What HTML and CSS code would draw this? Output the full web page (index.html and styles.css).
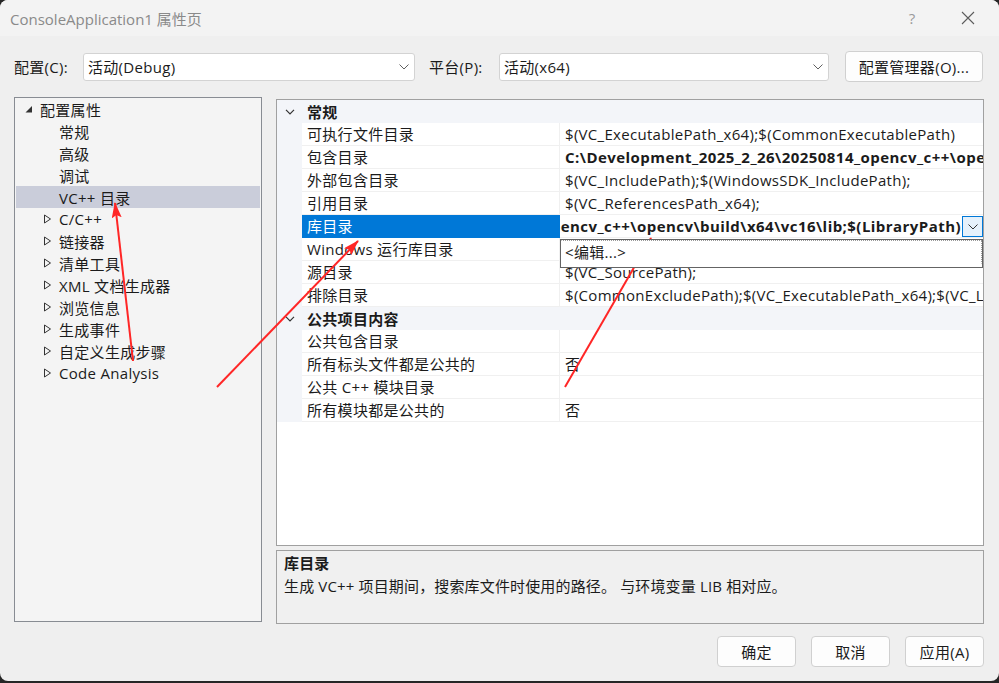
FILE: index.html
```html
<!DOCTYPE html>
<html lang="zh-CN">
<head>
    <meta charset="UTF-8">
    <title>ConsoleApplication1 属性页</title>
    <link rel="stylesheet" href="styles.css">
</head>
<body>
<div class="window">
    <!-- タイトルバー -->
    <div class="titlebar">
        <span class="title">ConsoleApplication1 属性页</span>
        <span class="help">?</span>
        <span class="close">
            <svg width="14" height="14" viewBox="0 0 14 14"><path d="M1 1L13 13M13 1L1 13" stroke="#5c5c5c" stroke-width="1.1" fill="none"/></svg>
        </span>
    </div>

    <!-- 構成 / プラットフォーム -->
    <div class="toolbar">
        <span class="field-label">配置(C):</span>
        <div class="combo combo-config">
            <span>活动(Debug)</span>
            <svg class="chev" width="10" height="6" viewBox="0 0 10 6"><polyline points="0.5,0.5 5,5 9.5,0.5" stroke="#606060" fill="none"/></svg>
        </div>
        <span class="field-label platform-label">平台(P):</span>
        <div class="combo combo-platform">
            <span>活动(x64)</span>
            <svg class="chev" width="10" height="6" viewBox="0 0 10 6"><polyline points="0.5,0.5 5,5 9.5,0.5" stroke="#606060" fill="none"/></svg>
        </div>
        <button class="btn btn-manager">配置管理器(O)...</button>
    </div>

    <div class="main">
        <!-- 左ツリー -->
        <div class="tree">
            <div class="tree-row level0">
                <span class="twisty"><svg width="10" height="22"><polygon points="8,8 8,14.5 1.5,14.5" fill="#333"/></svg></span>
                <span>配置属性</span>
            </div>
            <div class="tree-row level1"><span class="twisty"></span><span>常规</span></div>
            <div class="tree-row level1"><span class="twisty"></span><span>高级</span></div>
            <div class="tree-row level1"><span class="twisty"></span><span>调试</span></div>
            <div class="tree-row level1 selected"><span class="twisty"></span><span>VC++ 目录</span></div>
            <div class="tree-row level1"><span class="twisty"><svg width="10" height="22"><polygon points="1.5,7 7.5,11 1.5,15" fill="none" stroke="#333"/></svg></span><span>C/C++</span></div>
            <div class="tree-row level1"><span class="twisty"><svg width="10" height="22"><polygon points="1.5,7 7.5,11 1.5,15" fill="none" stroke="#333"/></svg></span><span>链接器</span></div>
            <div class="tree-row level1"><span class="twisty"><svg width="10" height="22"><polygon points="1.5,7 7.5,11 1.5,15" fill="none" stroke="#333"/></svg></span><span>清单工具</span></div>
            <div class="tree-row level1"><span class="twisty"><svg width="10" height="22"><polygon points="1.5,7 7.5,11 1.5,15" fill="none" stroke="#333"/></svg></span><span>XML 文档生成器</span></div>
            <div class="tree-row level1"><span class="twisty"><svg width="10" height="22"><polygon points="1.5,7 7.5,11 1.5,15" fill="none" stroke="#333"/></svg></span><span>浏览信息</span></div>
            <div class="tree-row level1"><span class="twisty"><svg width="10" height="22"><polygon points="1.5,7 7.5,11 1.5,15" fill="none" stroke="#333"/></svg></span><span>生成事件</span></div>
            <div class="tree-row level1"><span class="twisty"><svg width="10" height="22"><polygon points="1.5,7 7.5,11 1.5,15" fill="none" stroke="#333"/></svg></span><span>自定义生成步骤</span></div>
            <div class="tree-row level1"><span class="twisty"><svg width="10" height="22"><polygon points="1.5,7 7.5,11 1.5,15" fill="none" stroke="#333"/></svg></span><span>Code Analysis</span></div>
        </div>

        <div class="right">
            <!-- プロパティグリッド -->
            <div class="grid">
                <div class="cat-row">
                    <span class="cat-toggle"><svg width="10" height="6" viewBox="0 0 10 6"><polyline points="1,0.8 5,4.8 9,0.8" stroke="#333" stroke-width="1.2" fill="none"/></svg></span>
                    <span class="cat-name">常规</span>
                </div>
                <div class="prop-row">
                    <span class="gutter"></span>
                    <span class="name">可执行文件目录</span>
                    <span class="value">$(VC_ExecutablePath_x64);$(CommonExecutablePath)</span>
                </div>
                <div class="prop-row">
                    <span class="gutter"></span>
                    <span class="name">包含目录</span>
                    <span class="value bold">C:\Development_2025_2_26\20250814_opencv_c++\opencv\build\include;$(IncludePath)</span>
                </div>
                <div class="prop-row">
                    <span class="gutter"></span>
                    <span class="name">外部包含目录</span>
                    <span class="value">$(VC_IncludePath);$(WindowsSDK_IncludePath);</span>
                </div>
                <div class="prop-row">
                    <span class="gutter"></span>
                    <span class="name">引用目录</span>
                    <span class="value">$(VC_ReferencesPath_x64);</span>
                </div>
                <div class="prop-row active">
                    <span class="gutter"></span>
                    <span class="name">库目录</span>
                    <div class="value editing">
                        <div class="edit-text"><span class="bold">C:\Development_2025_2_26\20250814_opencv_c++\opencv\build\x64\vc16\lib;$(LibraryPath)</span></div>
                        <span class="dd-btn"><svg width="10" height="6" viewBox="0 0 10 6"><polyline points="0.5,0.5 5,5 9.5,0.5" stroke="#333" fill="none"/></svg></span>
                        <div class="dd-list">
                            <div class="dd-item">&lt;编辑...&gt;</div>
                        </div>
                    </div>
                </div>
                <div class="prop-row">
                    <span class="gutter"></span>
                    <span class="name">Windows 运行库目录</span>
                    <span class="value">$(WindowsSDK_MetadataPath);</span>
                </div>
                <div class="prop-row">
                    <span class="gutter"></span>
                    <span class="name">源目录</span>
                    <span class="value">$(VC_SourcePath);</span>
                </div>
                <div class="prop-row">
                    <span class="gutter"></span>
                    <span class="name">排除目录</span>
                    <span class="value">$(CommonExcludePath);$(VC_ExecutablePath_x64);$(VC_LibraryPath_x64)</span>
                </div>
                <div class="cat-row">
                    <span class="cat-toggle"><svg width="10" height="6" viewBox="0 0 10 6"><polyline points="1,0.8 5,4.8 9,0.8" stroke="#333" stroke-width="1.2" fill="none"/></svg></span>
                    <span class="cat-name">公共项目内容</span>
                </div>
                <div class="prop-row">
                    <span class="gutter"></span>
                    <span class="name">公共包含目录</span>
                    <span class="value"></span>
                </div>
                <div class="prop-row">
                    <span class="gutter"></span>
                    <span class="name">所有标头文件都是公共的</span>
                    <span class="value">否</span>
                </div>
                <div class="prop-row">
                    <span class="gutter"></span>
                    <span class="name">公共 C++ 模块目录</span>
                    <span class="value"></span>
                </div>
                <div class="prop-row">
                    <span class="gutter"></span>
                    <span class="name">所有模块都是公共的</span>
                    <span class="value">否</span>
                </div>
            </div>

            <!-- 説明欄 -->
            <div class="desc">
                <div class="desc-title">库目录</div>
                <div class="desc-text">生成 VC++ 项目期间，搜索库文件时使用的路径。 与环境变量 LIB 相对应。</div>
            </div>
        </div>
    </div>

    <div class="footer">
        <button class="btn">确定</button>
        <button class="btn">取消</button>
        <button class="btn">应用(A)</button>
    </div>

    <!-- 赤い矢印 (注釈) -->
    <svg class="arrows" width="999" height="683" viewBox="0 0 999 683">
        <defs>
            <marker id="head" markerUnits="userSpaceOnUse" markerWidth="16" markerHeight="10" refX="15" refY="5" orient="auto">
                <polygon points="0,0 16,5 0,10 3,5" fill="#ff2626"/>
            </marker>
        </defs>
        <line x1="133" y1="361" x2="115" y2="203" stroke="#ff2626" stroke-width="2" marker-end="url(#head)"/>
        <line x1="217" y1="387" x2="358" y2="241" stroke="#ff2626" stroke-width="2" marker-end="url(#head)"/>
        <line x1="565" y1="387" x2="651" y2="238" stroke="#ff2626" stroke-width="2" marker-end="url(#head)"/>
    </svg>
</div>
</body>
</html>
```

FILE: styles.css
```css
html, body { margin: 0; background: #262626; }
body {
    width: 999px;
    height: 683px;
    overflow: hidden;
    font-family: "Segoe UI", "Open Sans", "Noto Sans CJK SC", sans-serif;
    font-size: 15px;
    letter-spacing: 0.3px;
    color: #1b1b1b;
}

.window {
    position: relative;
    height: 681px;
    background: #efefef;
    border-radius: 8px;
    overflow: hidden;
    display: flex;
    flex-direction: column;
}

/* タイトルバー */
.titlebar {
    height: 36px;
    flex: none;
    background: #f3f3f3;
    display: flex;
    align-items: center;
    padding-left: 10px;
    letter-spacing: 0;
}
.title { flex: 1; color: #8a8a8a; margin-top: 1px; }
.help { width: 20px; text-align: center; color: #9a9a9a; margin-right: 15px; }
.close { width: 62px; display: flex; justify-content: center; align-items: center; }

/* 上部ツールバー */
.toolbar {
    height: 31px;
    margin-top: 15px;
    padding: 0 16px 0 14px;
    display: flex;
    align-items: center;
    flex: none;
}
.field-label { width: 69px; }
.platform-label { margin-left: 14px; width: 70px; }
.combo {
    box-sizing: border-box;
    height: 28px;
    background: #fff;
    border: 1px solid #d3d3d3;
    border-radius: 3px;
    display: flex;
    align-items: center;
    padding: 0 5px 0 4px;
}
.combo span { flex: 1; }
.combo-config { width: 332px; }
.combo-platform { width: 330px; }

.btn {
    box-sizing: border-box;
    height: 31px;
    width: 79px;
    padding: 0;
    background: #fdfdfd;
    border: 1px solid #d0d0d0;
    border-radius: 4px;
    font-family: inherit;
    font-size: 15px;
    letter-spacing: inherit;
    color: #1b1b1b;
}
.btn-manager { width: 138px; margin-left: 16px; }

/* メイン */
.main {
    display: flex;
    gap: 14px;
    padding: 0 15px 0 14px;
    margin-top: 15px;
    height: 527px;
    flex: none;
}

.tree {
    box-sizing: border-box;
    width: 249px;
    height: 525px;
    border: 1px solid #888c93;
    background: #f4f4f4;
    padding: 0 1px 1px;
}
.tree-row {
    height: 22px;
    display: flex;
    align-items: center;
    white-space: nowrap;
}
.tree-row .twisty { width: 16px; height: 22px; flex: none; }
.tree-row.level0 { padding-left: 8px; }
.tree-row.level1 { padding-left: 27px; }
.tree-row.selected { background: #cacdda; }

.right {
    width: 708px;
    display: flex;
    flex-direction: column;
}

/* プロパティグリッド */
.grid {
    box-sizing: border-box;
    margin-top: 2px;
    height: 447px;
    border: 1px solid #a0a0a0;
    background: #fff;
}
.cat-row {
    height: 23px;
    background: #f3f5f9;
    display: flex;
    align-items: center;
    font-weight: bold;
}
.cat-toggle { width: 25px; display: flex; justify-content: center; padding-left: 1px; box-sizing: border-box; }
.cat-name { padding-left: 5px; }

.prop-row { height: 23px; display: flex; }
.gutter { width: 25px; flex: none; background: #f3f5f9; }
.prop-row .name {
    box-sizing: border-box;
    width: 258px;
    flex: none;
    padding-left: 5px;
    line-height: 22px;
    border-bottom: 1px solid #f0f0f0;
    border-right: 1px solid #f0f0f0;
    white-space: nowrap;
}
.prop-row .value {
    flex: 1;
    min-width: 0;
    box-sizing: border-box;
    padding-left: 5px;
    line-height: 22px;
    border-bottom: 1px solid #f0f0f0;
    white-space: nowrap;
    overflow: hidden;
}
.bold { font-weight: bold; letter-spacing: 0.45px; }

.prop-row.active .name { background: #0078d7; color: #fff; border-color: #0078d7; }
.value.editing {
    position: relative;
    overflow: visible;
    display: flex;
    padding-left: 0;
}
.edit-text {
    flex: 1;
    min-width: 0;
    overflow: hidden;
    display: flex;
    justify-content: flex-end;
    padding-right: 1px;
}
.dd-btn {
    box-sizing: border-box;
    width: 21px;
    height: 21px;
    margin-top: 1px;
    border: 1px solid #0078d7;
    background: #e5f1fb;
    display: flex;
    align-items: center;
    justify-content: center;
}
.dd-list {
    position: absolute;
    top: 24px;
    left: 0;
    right: 0;
    height: 29px;
    box-sizing: border-box;
    border: 1px solid #646464;
    background: #fff;
    z-index: 2;
}
.dd-item {
    height: 22px;
    line-height: 22px;
    padding-left: 3px;
    border: 1px dotted #9a9a9a;
    border-left-color: transparent;
    border-bottom-color: transparent;
}

/* 説明欄 */
.desc {
    box-sizing: border-box;
    margin-top: 4px;
    height: 74px;
    border: 1px solid #a0a0a0;
    background: #f0f0f0;
    padding: 1px 7px;
    line-height: 23px;
    letter-spacing: 0.15px;
}
.desc-title { font-weight: bold; }

/* 下部ボタン */
.footer {
    display: flex;
    justify-content: flex-end;
    gap: 15px;
    padding-right: 15px;
    margin-top: 12px;
}

.arrows {
    position: absolute;
    top: 0;
    left: 0;
    pointer-events: none;
}
```
